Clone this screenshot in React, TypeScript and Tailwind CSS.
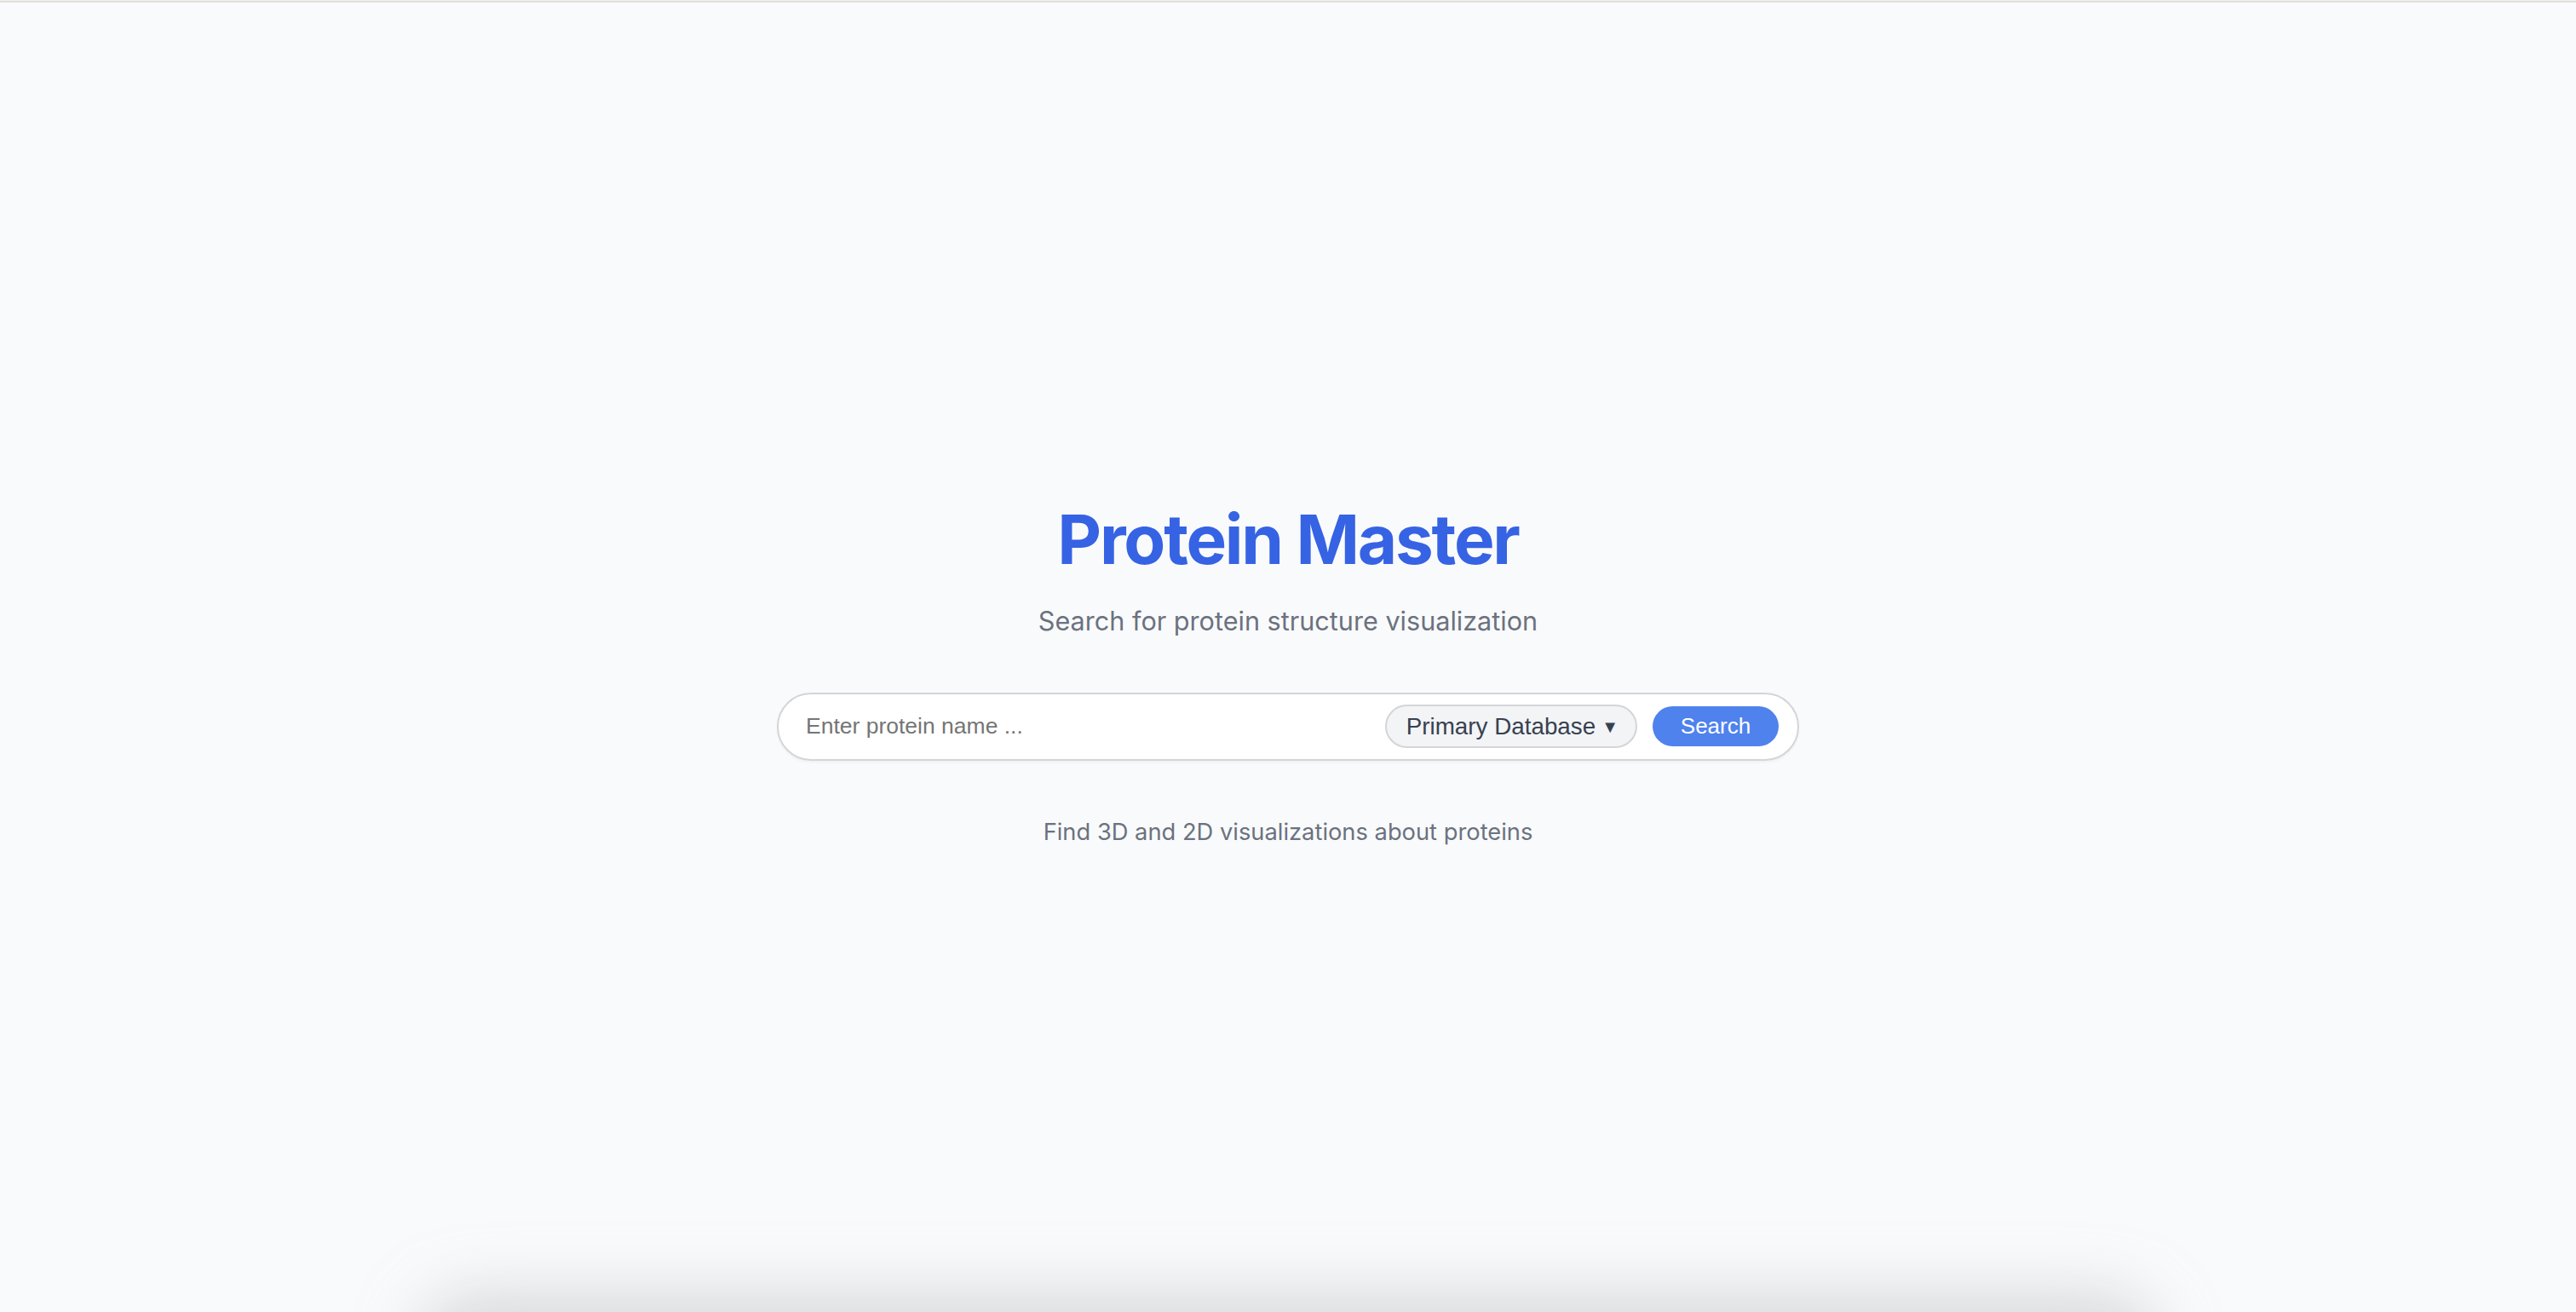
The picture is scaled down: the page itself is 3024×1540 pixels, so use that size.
import React from "react";

export default function App() {
  return (
    <div className="relative min-h-[1540px] w-full overflow-hidden bg-[#f9fafb]">
      <div className="h-[1px] w-full bg-[#f1efeb]" />
      <div className="h-[2px] w-full bg-[#e3e1dc]" />
      <main className="flex flex-col items-center pt-[590px]">
        <h1
          className="text-[80px] leading-none font-bold tracking-[-0.028em] text-[#3663e4]"
          style={{ fontFamily: "Inter, 'Noto Sans', sans-serif" }}
        >
          Protein Master
        </h1>
        <p
          className="mt-[41px] text-[30.6px] leading-none text-[#6b7280]"
          style={{ fontFamily: "Inter, 'Noto Sans', sans-serif" }}
        >
          Search for protein structure visualization
        </p>
        <div
          className="mt-[68px] flex h-[80px] w-[1200px] items-center rounded-full border-2 border-[#d4d5d9] bg-white shadow-[0_2px_3px_rgba(0,0,0,0.04)]"
          style={{ fontFamily: "'Liberation Sans', Arial, sans-serif" }}
        >
          <input
            type="text"
            placeholder="Enter protein name ..."
            className="h-full min-w-0 flex-1 rounded-l-full bg-transparent pl-[32px] text-[26.5px] text-[#111827] outline-none placeholder:text-[#757575]"
          />
          <div className="flex h-[51px] items-center rounded-full border-2 border-[#d4d5d9] bg-[#f3f4f6] pl-[23px] pr-[20px] text-[27.8px] text-[#374151]">
            <span>Primary Database</span>
            <span className="ml-[7px] text-[20px] leading-none text-[#374151]">▼</span>
          </div>
          <button className="ml-[18px] mr-[22px] flex h-[47px] w-[148px] items-center justify-center rounded-full bg-[#4f82ed] text-[26px] text-white">
            Search
          </button>
        </div>
        <p
          className="mt-[70px] text-[27.3px] leading-none text-[#6b7280]"
          style={{ fontFamily: "Inter, 'Noto Sans', sans-serif" }}
        >
          Find 3D and 2D visualizations about proteins
        </p>
      </main>
      <div className="pointer-events-none absolute left-[520px] right-[520px] top-[1548px] h-[80px] rounded-[40px] bg-[#d0d1d4] shadow-[0_0_70px_30px_rgba(190,192,196,0.55)]" />
    </div>
  );
}
